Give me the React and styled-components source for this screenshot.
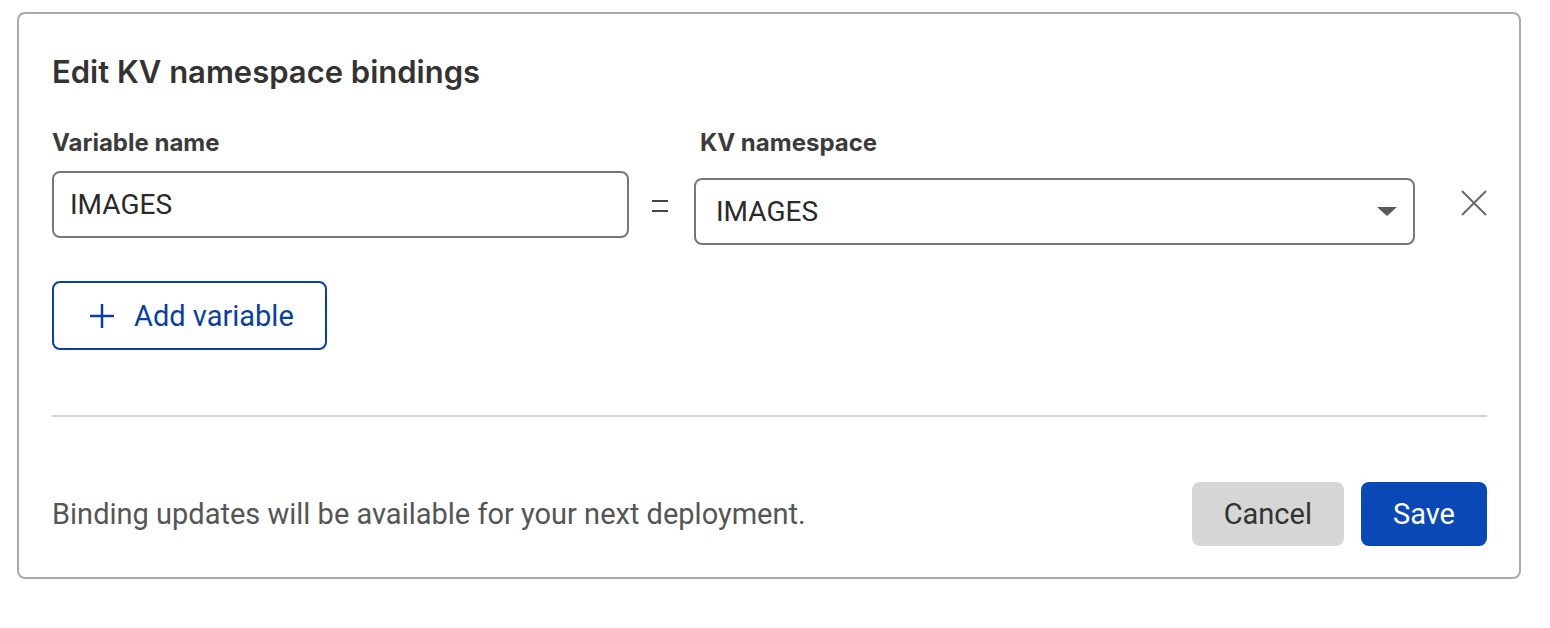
import React from "react";
import styled, { createGlobalStyle } from "styled-components";

const Global = createGlobalStyle`
  html, body { margin: 0; padding: 0; background: #ffffff; }
  body { font-family: Roboto, "Liberation Sans", sans-serif; }
  * { box-sizing: border-box; }
`;

const Page = styled.div`
  padding: 12px 0 0 17px;
`;

const Card = styled.section`
  width: 1504px;
  height: 567px;
  border: 2px solid #ababab;
  border-radius: 8px;
  padding: 40px 32px 0 33px;
  display: flex;
  flex-direction: column;
`;

const Title = styled.h2`
  margin: 0;
  font-family: Inter, "Liberation Sans", sans-serif;
  font-weight: 600;
  font-size: 31px;
  line-height: 36px;
  color: #333333;
  letter-spacing: 0;
`;

const BindGrid = styled.div`
  margin-top: 40px;
  display: grid;
  grid-template-columns: 577px 65px 721px 1fr;
  grid-template-rows: auto auto;
  align-items: start;
`;

const Label = styled.label`
  font-family: Inter, "Liberation Sans", sans-serif;
  font-weight: 700;
  font-size: 24px;
  line-height: 26px;
  color: #3b3b3b;
  grid-column: ${(p) => p.$col};
  padding-left: ${(p) => p.$indent || 0}px;
`;

const TextInput = styled.div`
  grid-column: 1;
  margin-top: ${(p) => p.$top}px;
  height: 67px;
  border: 2px solid #777777;
  border-radius: 8px;
  display: flex;
  align-items: center;
  padding: 0 16px;
  font-size: 28px;
  color: #2a2a2a;
`;

const Equals = styled.div`
  grid-column: 2;
  margin-top: 44px;
  display: flex;
  justify-content: center;
  padding-right: 4px;
`;

const EqualGlyph = styled.div`
  width: 16px;
  height: 12px;
  border-top: 2px solid #444;
  border-bottom: 2px solid #444;
`;

const Select = styled.div`
  grid-column: 3;
  margin-top: 22px;
  height: 67px;
  border: 2px solid #777777;
  border-radius: 8px;
  display: flex;
  align-items: center;
  justify-content: space-between;
  padding: 0 16px 0 20px;
  font-size: 28px;
  color: #2a2a2a;
`;

const Caret = styled.span`
  width: 0;
  height: 0;
  border-left: 10px solid transparent;
  border-right: 10px solid transparent;
  border-top: 9px solid #5a5a5a;
`;

const Remove = styled.button`
  grid-column: 4;
  margin-top: 34px;
  margin-left: 46px;
  width: 26px;
  height: 26px;
  padding: 0;
  border: none;
  background: none;
  display: flex;
  align-items: center;
  justify-content: center;
  cursor: pointer;
`;

const AddButton = styled.button`
  margin-top: 36px;
  align-self: flex-start;
  width: 275px;
  height: 69px;
  border: 2px solid #0b3f9f;
  border-radius: 8px;
  background: #ffffff;
  color: #0b3f9f;
  font-family: Roboto, "Liberation Sans", sans-serif;
  font-size: 29px;
  display: flex;
  align-items: center;
  gap: 20px;
  padding: 0 0 0 36px;
  cursor: pointer;
`;

const Divider = styled.hr`
  margin: 65px 0 0 0;
  border: none;
  border-top: 2px solid #d3d3d3;
  width: 100%;
`;

const Footer = styled.div`
  margin-top: 65px;
  display: flex;
  align-items: center;
  justify-content: space-between;
`;

const Note = styled.p`
  margin: 0;
  font-size: 29px;
  color: #555555;
`;

const Actions = styled.div`
  display: flex;
  gap: 17px;
`;

const ActionButton = styled.button`
  height: 64px;
  padding: 0 32px;
  border: none;
  border-radius: 8px;
  font-family: Roboto, "Liberation Sans", sans-serif;
  font-size: 29px;
  background: ${(p) => (p.$primary ? "#0a48b6" : "#d6d6d6")};
  color: ${(p) => (p.$primary ? "#ffffff" : "#333333")};
  cursor: pointer;
`;

export default function App() {
  return (
    <Page>
      <Global />
      <Card>
        <Title>Edit KV namespace bindings</Title>
        <BindGrid>
          <Label $col={1}>Variable name</Label>
          <Label $col={3} $indent={6}>KV namespace</Label>
          <TextInput $top={15}>IMAGES</TextInput>
          <Equals>
            <EqualGlyph />
          </Equals>
          <Select>
            <span>IMAGES</span>
            <Caret />
          </Select>
          <Remove aria-label="Remove">
            <svg width="26" height="26" viewBox="0 0 26 26">
              <path d="M1 1 L25 25 M25 1 L1 25" stroke="#6b6b6b" strokeWidth="2" fill="none" />
            </svg>
          </Remove>
        </BindGrid>
        <AddButton>
          <svg width="24" height="24" viewBox="0 0 24 24">
            <path d="M12 0 V24 M0 12 H24" stroke="#0b3f9f" strokeWidth="2.5" fill="none" />
          </svg>
          Add variable
        </AddButton>
        <Divider />
        <Footer>
          <Note>Binding updates will be available for your next deployment.</Note>
          <Actions>
            <ActionButton>Cancel</ActionButton>
            <ActionButton $primary>Save</ActionButton>
          </Actions>
        </Footer>
      </Card>
    </Page>
  );
}
